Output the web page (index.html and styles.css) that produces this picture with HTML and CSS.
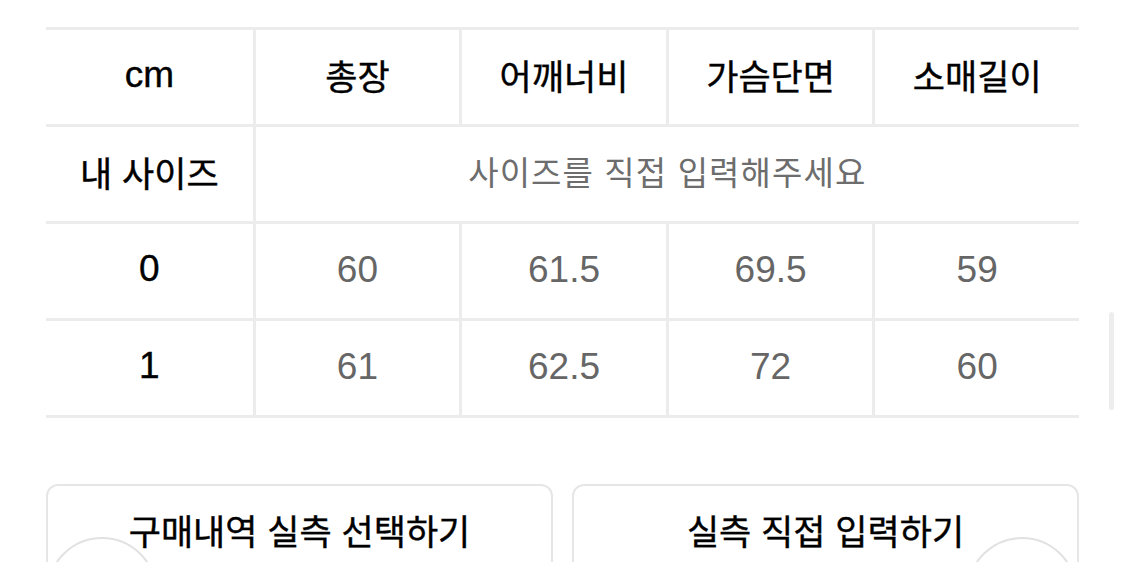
FILE: index.html
```html
<!DOCTYPE html>
<html lang="ko">
<head>
<meta charset="utf-8">
<title>실측 사이즈</title>
<link rel="stylesheet" href="styles.css">
</head>
<body>
<div class="page">
  <div class="size-table">
    <div class="cell head"><span class="latin">cm</span></div>
    <div class="cell head col">총장</div>
    <div class="cell head col">어깨너비</div>
    <div class="cell head col">가슴단면</div>
    <div class="cell head col">소매길이</div>

    <div class="cell rowhead">내 사이즈</div>
    <div class="cell col placeholder span4">사이즈를 직접 입력해주세요</div>

    <div class="cell rowhead"><span class="latin">0</span></div>
    <div class="cell col value">60</div>
    <div class="cell col value">61.5</div>
    <div class="cell col value">69.5</div>
    <div class="cell col value">59</div>

    <div class="cell rowhead"><span class="latin">1</span></div>
    <div class="cell col value">61</div>
    <div class="cell col value">62.5</div>
    <div class="cell col value">72</div>
    <div class="cell col value">60</div>
  </div>

  <div class="actions">
    <button class="action" type="button">구매내역 실측 선택하기<span class="ring ring-left"></span></button>
    <button class="action" type="button">실측 직접 입력하기<span class="ring ring-right"></span></button>
  </div>
</div>
<div class="scroll-thumb"></div>
</body>
</html>
```

FILE: styles.css
```css
html, body {
  margin: 0;
  padding: 0;
  background: #ffffff;
  overflow: hidden;
}

body {
  font-family: "Noto Sans CJK KR", "Liberation Sans", sans-serif;
  color: #111111;
}

.page {
  padding: 27px 46px 0 46px;
}

.size-table {
  display: grid;
  grid-template-columns: repeat(5, 1fr);
  border-top: 3px solid #ececec;
}

.cell {
  box-sizing: border-box;
  height: 97px;
  padding-bottom: 5px;
  border-bottom: 3px solid #ececec;
  display: flex;
  align-items: center;
  justify-content: center;
  font-size: 35px;
  line-height: 1;
  white-space: nowrap;
}

.col {
  border-left: 3px solid #ececec;
}

.head {
  font-weight: 400;
  color: #000000;
  -webkit-text-stroke: 0.4px #000000;
}

.rowhead {
  font-weight: 400;
  color: #000000;
  -webkit-text-stroke: 0.4px #000000;
}

.latin {
  font-family: "Liberation Sans", sans-serif;
  font-size: 37px;
  font-weight: 400;
}

.placeholder {
  grid-column: span 4;
  font-size: 33px;
  letter-spacing: 1.1px;
  color: #6d6d6d;
}

.value {
  font-family: "Liberation Sans", sans-serif;
  font-size: 37px;
  padding-bottom: 3px;
  color: #666666;
}

.actions {
  display: grid;
  grid-template-columns: 1fr 1fr;
  gap: 19px;
  margin-top: 66px;
}

.action {
  position: relative;
  box-sizing: border-box;
  height: 130px;
  margin: 0;
  padding: 24px 0 0 0;
  border: 2px solid #e6e6e6;
  border-radius: 12px;
  background: #ffffff;
  font-family: "Noto Sans CJK KR", "Liberation Sans", sans-serif;
  font-size: 35px;
  font-weight: 400;
  -webkit-text-stroke: 0.4px #000000;
  line-height: 40px;
  color: #000000;
  text-align: center;
  display: flex;
  justify-content: center;
  align-items: flex-start;
  overflow: visible;
}

.ring {
  position: absolute;
  top: 51px;
  width: 110px;
  height: 110px;
  box-sizing: border-box;
  border: 2px solid #e2e2e2;
  border-radius: 50%;
  background: transparent;
  -webkit-text-stroke: 0;
}

.ring-left {
  left: -1px;
}

.ring-right {
  right: 0;
}

.scroll-thumb {
  position: fixed;
  left: 1109px;
  top: 312px;
  width: 5px;
  height: 98px;
  border-radius: 3px;
  background: #ededed;
}
```
